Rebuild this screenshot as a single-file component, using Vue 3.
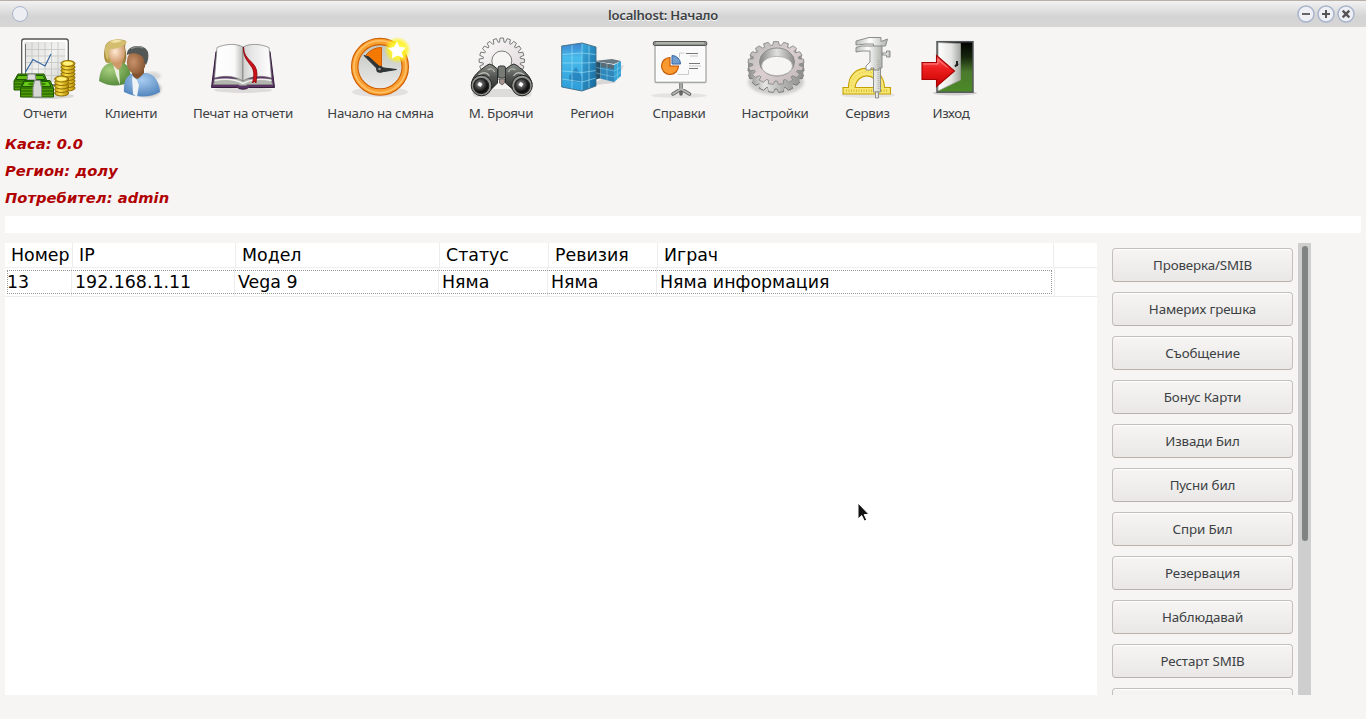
<script setup>
const tools = [
  { id: 'reports', label: 'Отчети', width: 90 },
  { id: 'clients', label: 'Клиенти', width: 82 },
  { id: 'print', label: 'Печат на отчети', width: 142 },
  { id: 'shift', label: 'Начало на смяна', width: 133 },
  { id: 'counters', label: 'М. Броячи', width: 108 },
  { id: 'region', label: 'Регион', width: 74 },
  { id: 'queries', label: 'Справки', width: 100 },
  { id: 'settings', label: 'Настройки', width: 92 },
  { id: 'service', label: 'Сервиз', width: 93 },
  { id: 'exit', label: 'Изход', width: 74 },
]
const info = ['Каса: 0.0', 'Регион: долу', 'Потребител: admin']
const headers = ['Номер', 'IP', 'Модел', 'Статус', 'Ревизия', 'Играч', '']
const row = ['13', '192.168.1.11', 'Vega 9', 'Няма', 'Няма', 'Няма информация', '']
const actions = ['Проверка/SMIB', 'Намерих грешка', 'Съобщение', 'Бонус Карти', 'Извади Бил', 'Пусни бил', 'Спри Бил', 'Резервация', 'Наблюдавай', 'Рестарт SMIB', '']

// Closed outline of a toothed wheel, optionally flattened into an ellipse.
function gear(cx, cy, rx, ry, depth, teeth) {
  const pts = []
  for (let i = 0; i < teeth; i++) {
    for (const [f, d] of [[-0.38, depth], [-0.24, 0], [0.24, 0], [0.38, depth]]) {
      const a = ((i + f) / teeth) * Math.PI * 2 - Math.PI / 2
      pts.push(`${(cx + (rx - d) * Math.cos(a)).toFixed(2)} ${(cy + (ry - d * ry / rx) * Math.sin(a)).toFixed(2)}`)
    }
  }
  return `M${pts.join('L')}Z`
}
const wheel = gear(32.3, 24.7, 22.7, 22.7, 4, 20)
const cogTop = gear(33, 27, 28, 21.5, 4.5, 17)
const cogLow = gear(33, 35, 28, 21.5, 4.5, 17)
const cogLayers = [34, 33, 32, 31, 30, 29, 28].map((y) => gear(33, y, 28, 21.5, 4.5, 17))
const coinsBack = [52, 48.5, 45, 41.5, 38, 34.5, 31, 27.5]
const coinsFront = [57, 53.5, 50, 46.5, 43]
</script>

<template>
  <div class="window">
    <header class="titlebar">
      <span class="orb"></span>
      <span class="title">localhost: Начало</span>
      <span class="controls">
        <svg v-for="k in 3" :key="k" width="20" height="20" viewBox="0 0 20 20">
          <circle cx="10" cy="10" r="8" fill="#eef0f6" stroke="#a9b4cb" stroke-width="1.5" />
          <path v-if="k === 1" d="M6 10h8" stroke="#555" stroke-width="1.8" />
          <path v-if="k === 2" d="M6 10h8M10 6v8" stroke="#555" stroke-width="2" />
          <path v-if="k === 3" d="M6.7 6.7l6.6 6.6M13.3 6.7l-6.6 6.6" stroke="#555" stroke-width="2.4" />
        </svg>
      </span>
    </header>

    <nav class="toolbar">
      <div v-for="t in tools" :key="t.id" class="tool" :style="{ width: t.width + 'px' }">
        <svg v-if="t.id === 'reports'" class="icon" viewBox="0 0 64 64">
          <defs>
            <linearGradient id="brd" x1="0" y1="0" x2="1" y2="1"><stop offset="0" stop-color="#dfe0dd" /><stop offset=".5" stop-color="#f2f2f0" /><stop offset="1" stop-color="#d4d6d1" /></linearGradient>
            <linearGradient id="coin"><stop offset="0" stop-color="#c29a08" /><stop offset=".35" stop-color="#fbe04d" /><stop offset="1" stop-color="#b58a02" /></linearGradient>
          </defs>
          <ellipse cx="34" cy="60" rx="27" ry="3" fill="#000" opacity=".12" />
          <rect x="8.7" y="3" width="46.6" height="46" rx="2.5" fill="#fff" stroke="#555753" stroke-width="1.3" />
          <rect x="11.5" y="6" width="41" height="40" fill="url(#brd)" />
          <path d="M12 13.5h40M12 20h40M12 26.500h40M12 33h40M12 39.500h40M19 6v40M25.500 6v40M32 6v40M38.500 6v40M45 6v40" stroke="#c3c5c1" stroke-width=".8" />
          <path d="M12.500 8v30" stroke="#555" stroke-width=".8" />
          <path d="M12.500 36l7.500-12.500L32 30l6-12" fill="none" stroke="#3465a4" stroke-width="1.2" />
          <g fill="url(#coin)" stroke="#8a6a00" stroke-width="1">
            <ellipse v-for="y in coinsBack" :key="y" cx="55" :cy="y" rx="7" ry="3" />
            <ellipse v-for="y in coinsFront" :key="'f' + y" cx="48.700" :cy="y" rx="7" ry="3" />
          </g>
          <ellipse cx="55" cy="27.500" rx="5" ry="1.700" fill="#fff27e" /><ellipse cx="48.700" cy="43" rx="5" ry="1.700" fill="#fff27e" />
          <g stroke="#1d5803" stroke-width="1" stroke-linejoin="round">
            <path d="M5 38h26l3 7v9H1v-9z" fill="#4e9a06" /><path d="M1 45h33M1 48h33M1 51h33" />
            <path d="M5 39.500h25l2 4H3z" fill="#62bd12" />
            <path d="M15 38h7l1 6h-9z" fill="#ddd" stroke="#888" />
            <path d="M11 44.500h26l3.500 7v9.500h-33v-9.500z" fill="#4e9a06" /><path d="M8 52h32M8 55h32M8 58h32" />
            <path d="M11.500 45.500h24l2.500 5H9z" fill="#67ca17" />
            <ellipse cx="24" cy="48" rx="9" ry="1.800" fill="#3c8204" stroke="none" />
            <path d="M21.500 44.500h5.500l1.500 7v9.500h-8.500v-9.500z" fill="#d5d7d3" stroke="#888a85" />
          </g>
        </svg>

        <svg v-if="t.id === 'clients'" class="icon" viewBox="0 0 64 64">
          <defs>
            <linearGradient id="hair"><stop offset="0" stop-color="#a08532" /><stop offset=".5" stop-color="#d9c474" /><stop offset="1" stop-color="#8c7336" /></linearGradient>
            <radialGradient id="skin" cx=".4" cy=".35" r=".7"><stop offset="0" stop-color="#ffe9d2" /><stop offset="1" stop-color="#c98e5d" /></radialGradient>
            <radialGradient id="tan" cx=".35" cy=".5" r=".75"><stop offset="0" stop-color="#c99168" /><stop offset="1" stop-color="#7a4b28" /></radialGradient>
            <radialGradient id="green" cx=".35" cy=".3" r=".8"><stop offset="0" stop-color="#a8cf7e" /><stop offset="1" stop-color="#4c8333" /></radialGradient>
            <radialGradient id="blue" cx=".5" cy=".3" r=".75"><stop offset="0" stop-color="#a9ccf0" /><stop offset="1" stop-color="#4c80ba" /></radialGradient>
            <filter id="soft"><feGaussianBlur stdDeviation="1.500" /></filter>
          </defs>
          <ellipse cx="49" cy="53" rx="13" ry="8" fill="#000" opacity=".24" filter="url(#soft)" /><ellipse cx="53" cy="40" rx="9" ry="4" fill="#000" opacity=".12" filter="url(#soft)" />
          <path d="M8 27C4 24 5 16 6 11C8 2 22 2 27 5l-1 6C27 17 29 22 25 29z" fill="url(#hair)" />
          <path d="M0 45C1 33 5 28 12 27h12c6 2 8 8 8 18Q16 54 0 45z" fill="url(#green)" />
          <path d="M14 28l6 6 1 15-4-10z" fill="#ecefdf" />
          <path d="M13 23h10v7l-4 4-5-5z" fill="#cf9869" />
          <path d="M10 13c7 0 11-3 15-4 2 8 1 18-7 19-7 0-9-8-8-15z" fill="url(#skin)" />
          <path d="M6 12C8 3 23 2 28 6c-3 5-11 7-17 7l-2 11c-3-3-3-8-3-12z" fill="#d3be70" />
          <path d="M11 6q6-4 12-1-6 3-12 1z" fill="#f0e3a6" />
          <path d="M25 56c-1-11 3-18 11-19h11c9 1 13 9 14 19q-17 9-36 0z" fill="url(#blue)" />
          <path d="M33 40l5 4 2 5-2 12-4-3z" fill="#f0f3f6" />
          <path d="M33 30h12v7q-4 5-7 6-4-2-5-5z" fill="#83532e" />
          <ellipse cx="37.200" cy="26" rx="9.500" ry="12" fill="url(#tan)" />
          <path d="M28 19C27 8 46 7 49 16c1 5 0 9-2 13-2-2-2-6-3-8-5-4-10-5-16-2z" fill="#535755" />
          <path d="M32 13q6-4 12-1" fill="none" stroke="#868a87" stroke-width="1.500" />
        </svg>

        <svg v-if="t.id === 'print'" class="icon" viewBox="0 0 64 64">
          <defs>
            <linearGradient id="pgl"><stop offset="0" stop-color="#fff" /><stop offset=".7" stop-color="#fafafa" /><stop offset="1" stop-color="#bbbdb8" /></linearGradient>
            <linearGradient id="pgr"><stop offset="0" stop-color="#d1d2cf" /><stop offset=".3" stop-color="#e6e6e6" /><stop offset="1" stop-color="#fff" /></linearGradient>
          </defs>
          <ellipse cx="32" cy="54" rx="29" ry="3" fill="#000" opacity=".1" />
          <path d="M5 15.500L.5 51.500h26q1.500 1.700 5.500 1.700t5.500-1.700h26L59 15.500z" fill="#5c3566" stroke="#341c3b" stroke-width="1" />
          <path d="M4 43l-1.500 5.500H26q2 0 3 1h6q1-1 3-1h23.500L60 43z" fill="#b3b6af" stroke="#888a85" stroke-width=".7" />
          <path d="M6 11.500C14 8 25 7 32 11v34C24 40 14 39 3.500 42z" fill="url(#pgl)" stroke="#777" stroke-width=".7" />
          <path d="M58 11.500C50 8 39 7 32 11v34c8-5 18-6 28.500-3z" fill="url(#pgr)" stroke="#777" stroke-width=".7" />
          <path d="M3.500 44.500Q20 41 32 47.500Q44 41 60.500 44.500" fill="none" stroke="#f0f0ee" stroke-width="1.500" />
          <path d="M32.500 11C32.500 25 46 25 46 38l-1 9-1.500-1.500-2 1.200C43 41 43.500 36 41 31.500 37 25 32 22 32.500 11z" fill="#cc1219" stroke="#8a0007" stroke-width=".8" />
        </svg>

        <svg v-if="t.id === 'shift'" class="icon" viewBox="0 0 64 64">
          <defs>
            <linearGradient id="face" x1="0" y1="0" x2="0" y2="1"><stop offset="0" stop-color="#bfc2bd" /><stop offset="1" stop-color="#eeeeec" /></linearGradient>
            <radialGradient id="halo"><stop offset=".3" stop-color="#fffb50" /><stop offset=".65" stop-color="#fff21c" stop-opacity=".85" /><stop offset="1" stop-color="#fff21c" stop-opacity="0" /></radialGradient>
          </defs>
          <ellipse cx="31" cy="56" rx="28" ry="5" fill="#000" opacity=".08" />
          <circle cx="31" cy="30.700" r="25.300" fill="url(#face)" stroke="#ce5c00" stroke-width="7.500" />
          <circle cx="31" cy="30.700" r="25.300" fill="none" stroke="#f9a033" stroke-width="5.300" />
          <circle cx="31" cy="30.700" r="26" fill="none" stroke="#ffc46b" stroke-width="1.500" />
          <path d="M30.500 33L17 19Q23 11.500 32.500 11.500V33z" fill="#f57900" stroke="#ce5c00" />
          <path d="M30.500 35L15 19.500l5 1.500 12 11zM31 31.500l16.500 2-16.500 2.700z" fill="#2e3436" stroke="#2e3436" stroke-width="1" stroke-linejoin="round" />
          <circle cx="30.700" cy="33.300" r="3.500" fill="#2e3436" /><circle cx="30.500" cy="33" r="1.300" fill="#999" />
          <circle cx="48.500" cy="14" r="13.500" fill="url(#halo)" />
          <path d="M48 5.500l2.500 5.500 6.500.5-4.500 4.500 2 6-6-2.500-5.500 3 .5-6.500-4.500-4 6-1z" fill="#fff" />
        </svg>

        <svg v-if="t.id === 'counters'" class="icon" viewBox="0 0 64 64">
          <defs>
            <linearGradient id="bin" x1="0" y1="0" x2="0" y2="1"><stop offset="0" stop-color="#8a8e88" /><stop offset=".5" stop-color="#555753" /><stop offset="1" stop-color="#2e302e" /></linearGradient>
            <radialGradient id="lens" cx=".4" cy=".38"><stop offset="0" stop-color="#fff" /><stop offset=".35" stop-color="#666" /><stop offset="1" stop-color="#101010" /></radialGradient>
            <linearGradient id="pale" x2="1" y2="1"><stop offset="0" stop-color="#fafafa" /><stop offset="1" stop-color="#e0d5d8" /></linearGradient>
          </defs>
          <g transform="translate(.5 0)">
            <path :d="wheel" fill="url(#pale)" stroke="#777a76" stroke-width="1" />
            <circle cx="32.300" cy="25" r="10" fill="#f6f5f4" stroke="#777a76" />
            <rect x="3" y="53" width="59" height="8" rx="4" fill="#000" opacity=".1" />
            <path d="M2 48C3 39 10 35 17 29.500q3-3 6.500 0L28 33v14l-6 6zM62.500 48C61 39 54 35 47.500 29.500q-3-3-6.500 0L36 33v14l7 6z" fill="url(#bin)" stroke="#252825" />
            <path d="M18 34q5-3 7 2M46 34q-5-3-7 2M9 39q7-5 11 1M55 39q-7-5-11 1" fill="none" stroke="#b6bab3" stroke-width="1.300" />
            <rect x="28.500" y="30" width="7.500" height="12" rx="2" fill="#777b74" stroke="#2e3436" /><path d="M30 43h5v4l-2.500 2-2.500-2z" fill="#a79490" stroke="#555" stroke-width=".7" />
            <g stroke="#222" stroke-width="1"><circle cx="12" cy="49.500" r="10.300" fill="#8f928d" /><circle cx="52.500" cy="49.500" r="10.300" fill="#8f928d" /></g>
            <g stroke="#222" stroke-width="1.200"><circle cx="11.700" cy="50" r="7.500" fill="url(#lens)" /><circle cx="52.700" cy="50" r="7.500" fill="url(#lens)" /></g>
            <path d="M10 46l3 2-2 3-3-2zM51 46l3 2-2 3-3-2z" fill="#fff" />
          </g>
        </svg>

        <svg v-if="t.id === 'region'" class="icon" viewBox="0 0 64 64">
          <defs>
            <linearGradient id="glassL" x1="0" y1="0" x2="0" y2="1"><stop offset="0" stop-color="#3c82cd" /><stop offset=".3" stop-color="#49bbec" /><stop offset="1" stop-color="#2c9cd8" /></linearGradient>
            <linearGradient id="glassR" x1="0" y1="0" x2="1" y2="1"><stop offset="0" stop-color="#3aa9de" /><stop offset="1" stop-color="#15679c" /></linearGradient>
          </defs>
          <path d="M35 47l26-17 3-1-9 18-20 2z" fill="#000" opacity=".12" />
          <path d="M34 25l18-2 9 2-7 3z" fill="#667882" />
          <path d="M34 26l20 3v17l-20-5z" fill="#2e86ba" /><path d="M54 29l7-4v15l-7 6z" fill="#36a4d7" />
          <path d="M34 25l20 4v4l-20-3z" fill="#596b76" /><path d="M34 26l7 1v15l-7 2z" fill="#24506b" />
          <path d="M34 31l20 4 7-4M34 36.500l20 4.500 7-5M40.500 27v16M47 28v16.500M57.500 27v16" fill="none" stroke="#8ed0e9" stroke-width=".5" />
          <path d="M1.700 10L22 7v48L1.700 51z" fill="url(#glassL)" /><path d="M22 7l14 4v39L22 55z" fill="url(#glassR)" />
          <path d="M9 40l7-9 6 10v6l-13-2z" fill="#165f9c" opacity=".45" />
          <path d="M2 18.500l20-1.500 14 1.500M2 27h20l14-.5M2 35l20 1.500 14-2M2 43l20 3 14-4M12 9v44M22 7v48M29 9v43.500" fill="none" stroke="#9adef4" stroke-width=".65" />
          <path d="M1.700 51V10L22 7l14 4v39L22 55z" fill="none" stroke="#3f6c85" stroke-width=".9" />
        </svg>

        <svg v-if="t.id === 'queries'" class="icon" viewBox="0 0 64 64">
          <ellipse cx="32" cy="59.500" rx="28" ry="2.500" fill="#000" opacity=".07" />
          <path d="M34 46v7L26 58M34 53l8.500 5M34 51v7" fill="none" stroke="#646763" stroke-width="3.500" stroke-linecap="round" />
          <path d="M34 46v7L26 58M34 53l8.500 5" fill="none" stroke="#bbbdb9" stroke-width="1.500" stroke-linecap="round" />
          <rect x="8" y="9" width="51" height="37.500" rx="1" fill="#eeefec" stroke="#a7aaa5" stroke-width="1.300" />
          <rect x="9.500" y="11" width="48" height="33.500" fill="#fafafa" stroke="#fff" />
          <rect x="6.300" y="5.500" width="53.500" height="4" rx="1.500" fill="#8f928d" stroke="#555753" />
          <path d="M9 7h48" stroke="#babdb6" stroke-width="1.300" />
          <path d="M32.500 21.500v-4.500h5M30.500 38.500h11v-4.500" fill="none" stroke="#ccc" stroke-width="1" />
          <path d="M23 30v-8.500a8.500 8.500 0 1 0 8.500 8.500z" fill="#f99931" stroke="#c45500" stroke-width="1.100" />
          <path d="M25 28v-8.500a8.500 8.500 0 0 1 8.500 8.500z" fill="#729fcf" stroke="#3465a4" />
          <path d="M39 17.500h12M42 27.500h11M42 32.500h9" stroke="#777" stroke-width="1.100" /><path d="M43 20h8M42 30h12" stroke="#bbb" stroke-width=".8" />
        </svg>

        <svg v-if="t.id === 'settings'" class="icon" viewBox="0 0 64 64">
          <defs>
            <linearGradient id="steel" x2="1" y2="1"><stop offset="0" stop-color="#b6b8b5" /><stop offset=".5" stop-color="#dccfd2" /><stop offset="1" stop-color="#bcb5b6" /></linearGradient>
            <linearGradient id="steelSide"><stop offset="0" stop-color="#8a8b89" /><stop offset=".3" stop-color="#e6e7e5" /><stop offset=".6" stop-color="#b5b6b4" /><stop offset="1" stop-color="#8c8d8b" /></linearGradient>
            <linearGradient id="inner"><stop offset="0" stop-color="#858683" /><stop offset=".5" stop-color="#e1e2e0" /><stop offset="1" stop-color="#8a8b88" /></linearGradient>
            <filter id="haze"><feGaussianBlur stdDeviation="1.500" /></filter>
          </defs>
          <ellipse cx="33" cy="46" rx="28" ry="13" fill="#000" opacity=".16" filter="url(#haze)" />
          <path :d="cogLow" fill="url(#steelSide)" stroke="#757774" />
          <path v-for="(d, i) in cogLayers" :key="i" :d="d" fill="url(#steelSide)" />
          <path :d="cogTop" fill="url(#steel)" stroke="#888a87" stroke-width=".9" />
          <ellipse cx="34" cy="26" rx="17.500" ry="14" fill="url(#inner)" stroke="#8c8e8b" />
          <ellipse cx="34" cy="30" rx="15.500" ry="9.700" fill="#f6f5f4" stroke="#aaa" stroke-width=".8" />
        </svg>

        <svg v-if="t.id === 'service'" class="icon" viewBox="0 0 64 64">
          <defs><linearGradient id="rod"><stop offset="0" stop-color="#babdb6" /><stop offset=".45" stop-color="#fff" /><stop offset="1" stop-color="#aeb1aa" /></linearGradient></defs>
          <ellipse cx="32" cy="59" rx="27" ry="3" fill="#000" opacity=".07" />
          <path fill-rule="evenodd" d="M7 51.500h5.500C12 26 47.500 26 48.500 51.500h6v6.500H7zM19 51.500h23C41 36 21 36 19 51.500z" fill="#f7e772" stroke="#c4a000" stroke-width="1.100" />
          <path d="M10 54.700h42" stroke="#d3b92e" stroke-width="2.200" stroke-dasharray="1 1.500" /><path d="M15.500 50C17 31 44 31 45.500 50" fill="none" stroke="#dfc535" stroke-width="1" stroke-dasharray="1 2" />
          <g fill="url(#rod)" stroke="#8b8e89" stroke-width="1" stroke-linejoin="round">
            <path d="M20 5L33 1.500h12v4l6.500-2.500-2 7h-5v46h-7V8H30L20 9z" />
            <path d="M20 11.500l5-1.500h21v22h-3v2h-5v-2h-3v2h-5v-4l4-4V15H26l-6 1z" />
            <path d="M46 17h4.500v-2h3.500v6h-3.500v-2H46z" /><path d="M39.500 56h3v6h-3z" />
          </g>
          <path d="M42.500 24v29" stroke="#9a9d98" stroke-width="2" stroke-dasharray=".6 1.400" />
        </svg>

        <svg v-if="t.id === 'exit'" class="icon" viewBox="0 0 64 64">
          <defs>
            <linearGradient id="out" x1="0" y1="0" x2="0" y2="1"><stop offset="0" stop-color="#000" /><stop offset=".3" stop-color="#16250e" /><stop offset=".6" stop-color="#4b7a2c" /><stop offset="1" stop-color="#4b8b26" /></linearGradient>
            <linearGradient id="leaf" x2="1"><stop offset="0" stop-color="#fff" /><stop offset=".6" stop-color="#e4e5e2" /><stop offset="1" stop-color="#a5a7a2" /></linearGradient>
            <linearGradient id="arrow" x1="0" y1="0" x2="0" y2="1"><stop offset="0" stop-color="#f66" /><stop offset=".4" stop-color="#ef2020" /><stop offset="1" stop-color="#c90000" /></linearGradient>
          </defs>
          <ellipse cx="36" cy="57" rx="22" ry="2.500" fill="#000" opacity=".15" />
          <rect x="18" y="5.700" width="36" height="50.500" fill="url(#out)" stroke="#55585a" stroke-width="1.500" />
          <path d="M19 6.500l22.500 1v36.500L19 55z" fill="url(#leaf)" stroke="#999c96" stroke-width=".8" />
          <path d="M36 30.500l3-3M38 25v5" stroke="#222" stroke-width="2" />
          <path d="M3 26.500H17.500V19.500L35.500 35 17.500 50.500V43.500H3z" fill="url(#arrow)" stroke="#a80000" stroke-width="1.100" />
          <path d="M4.500 28h14.500v-4.500l9.500 8" fill="none" stroke="#ff9797" stroke-width=".8" />
        </svg>
        <span class="tool-label">{{ t.label }}</span>
      </div>
    </nav>

    <section class="info">
      <div v-for="line in info" :key="line">{{ line }}</div>
    </section>
    <div class="entry"></div>

    <main class="content">
      <div class="table">
        <div class="grid head"><span v-for="(h, i) in headers" :key="i">{{ h }}</span></div>
        <div class="grid row"><span v-for="(c, i) in row" :key="i">{{ c }}</span><i class="focus"></i></div>
      </div>
      <div class="actions">
        <button v-for="a in actions" :key="a">{{ a }}</button>
      </div>
      <div class="track"><div class="thumb"></div></div>
    </main>
    <svg class="pointer" width="14" height="21" viewBox="0 0 14 21"><path d="M1 1v16l3.700-3.500 2.600 5.500 2.400-1-2.500-5.500H12z" fill="#111" stroke="#fff" /></svg>
  </div>
</template>

<style>
body { background: #f6f5f4; overflow: hidden; }
</style>
<style scoped>
.window { position: relative; width: 1366px; height: 719px; overflow: hidden; display: flex; flex-direction: column; background: #f6f5f4; font-family: "Noto Sans", sans-serif; color: #3c4143; }
.titlebar { flex: none; height: 27px; box-sizing: border-box; display: flex; align-items: center; padding: 0 10px 1px 12px; border-top: 1px solid #b9afa8; background: linear-gradient(#f2f2f2, #d4d4d4 60%, #d6d6d6); }
.orb { width: 14px; height: 14px; border: 1.5px solid #a9b4cb; border-radius: 50%; background: #eceef3; }
.title { flex: 1; text-align: center; font-size: 13px; font-weight: 600; letter-spacing: -.2px; padding: 2px 0 0 2px; text-shadow: 0 1px #fff; }
.controls { display: flex; }
.toolbar { flex: none; display: flex; height: 103px; padding-top: 9px; box-sizing: border-box; }
.tool { display: flex; flex-direction: column; align-items: center; flex: none; }
.icon { width: 64px; height: 64px; flex: none; }
.tool-label { font-size: 13.33px; letter-spacing: -.3px; line-height: 18px; margin-top: 4px; white-space: nowrap; }
.info { flex: none; height: 86px; padding-left: 5px; font: italic bold 14.67px/27px "DejaVu Sans", sans-serif; letter-spacing: .07px; color: #b00000; }
.entry { flex: none; height: 17px; margin: 0 5px 10px; background: #fff; }
.content { display: flex; height: 452px; flex: none; padding-left: 5px; }
.table { width: 1092px; background: #fff; font: 17.4px/24px "DejaVu Sans", sans-serif; color: #000; }
.grid { display: grid; grid-template-columns: 68px 163px 204px 109px 109px 396px 43px; box-sizing: border-box; border-bottom: 1px solid #ededed; white-space: nowrap; }
.grid span { border-right: 1px solid #ededed; box-sizing: border-box; }
.grid span:last-of-type { border-right: 0; }
.head { height: 25px; }
.head span { padding-left: 6px; }
.row { height: 29px; position: relative; line-height: 28px; grid-template-columns: 67px 163px 204px 109px 109px 398px 42px; }
.row span { padding-left: 3px; }
.row span:first-child { padding-left: 2px; }
.focus { position: absolute; left: 2px; top: 2px; width: 1043px; height: 22px; border: 1px dotted #999; }
.actions { width: 181px; margin-left: 15px; padding-top: 5px; display: flex; flex-direction: column; gap: 10px; overflow: hidden; box-sizing: border-box; }
button { flex: none; height: 34px; border: 1px solid #c3bfba; border-bottom-color: #b9b3ac; border-radius: 4px; background: linear-gradient(#f6f5f4, #e9e8e7); box-shadow: inset 0 1px #fff; font: 13.33px/18px "Noto Sans", sans-serif; letter-spacing: -.12px; color: #3c4143; padding: 0; }
.track { width: 13px; margin-left: 5px; background: #cecece; padding: 3px 0 0 4px; box-sizing: border-box; }
.thumb { width: 6px; height: 295px; border-radius: 3px; background: #7f8382; }
.pointer { position: absolute; left: 857px; top: 502px; }
</style>
